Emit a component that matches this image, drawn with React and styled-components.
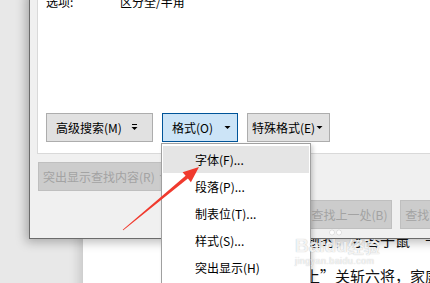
import React from "react"
import styled, { createGlobalStyle } from "styled-components"

const GlobalStyle = createGlobalStyle`
  html, body { margin: 0; padding: 0; background: #e8e8e8; }
  body { font-family: "Noto Sans CJK SC", "Noto Sans", sans-serif; }
`

const Screen = styled.div`
  position: relative;
  width: 430px;
  height: 283px;
  overflow: hidden;
  background: #e8e8e8;
`

// the word document behind the dialog
const DocPage = styled.div`
  position: absolute;
  left: 83px;
  top: 0;
  right: -20px;
  bottom: -20px;
  background: #fff;
  box-shadow: -4px 0 10px rgba(0, 0, 0, 0.14);
  display: flex;
  flex-direction: column;
  gap: 18px;
  padding: 231px 0 0 207px;
  font-family: "Noto Sans CJK SC", sans-serif;
  font-size: 15px;
  line-height: 18px;
  color: #111;
  white-space: nowrap;
`

const Dialog = styled.div`
  position: absolute;
  left: 29px;
  top: -10px;
  width: 470px;
  height: 248px;
  background: #f0f0f0;
  border-left: 1px solid #6b6b6b;
  border-bottom: 1px solid #6b6b6b;
  box-shadow: -3px 3px 10px rgba(0, 0, 0, 0.28);
  display: flex;
  flex-direction: column;
`

const Panel = styled.div`
  box-sizing: border-box;
  height: 164px;
  margin-left: 7px;
  background: #fff;
  border-left: 1px solid #d9d9d9;
  border-bottom: 1px solid #d9d9d9;
  display: flex;
  flex-direction: column;
  justify-content: space-between;
  padding: 4px 0 11px 8px;
`

const OptionRow = styled.div`
  display: flex;
  font-size: 12px;
  line-height: 16px;
  color: #000;
`

const OptionLabel = styled.span`
  width: 74px;
`

const ButtonRow = styled.div`
  display: flex;
  gap: 9px;
`

const Lower = styled.div`
  display: flex;
  flex-direction: column;
  align-items: flex-start;
  padding: 8px 0 0 8px;
`

const FindRow = styled.div`
  display: flex;
  gap: 8px;
  margin-top: 9px;
  padding-left: 269px;
`

const Button = styled.div`
  box-sizing: border-box;
  height: 29px;
  width: ${p => p.$w}px;
  display: flex;
  align-items: center;
  justify-content: ${p => (p.$center ? "center" : "space-between")};
  padding: 0 ${p => p.$pr ?? 0}px 0 ${p => p.$pl ?? 0}px;
  font-size: 12px;
  white-space: nowrap;
  color: ${p => (p.$off ? "#a3a3a3" : "#000")};
  background: ${p => (p.$active ? "#cce4f7" : p.$off ? "#cccccc" : "#e1e1e1")};
  border: 1px solid ${p => (p.$active ? "#005499" : p.$off ? "#bfbfbf" : "#adadad")};
`

const Menu = styled.div`
  position: absolute;
  left: 161px;
  top: 143px;
  width: 150px;
  height: 160px;
  box-sizing: border-box;
  background: #fff;
  border: 1px solid #a0a0a0;
  padding: 2px 1px;
  box-shadow: 2px 2px 4px rgba(0, 0, 0, 0.18);
`

const MenuItem = styled.div`
  height: 27px;
  display: flex;
  align-items: center;
  padding-left: 32px;
  font-size: 12px;
  color: #000;
  background: ${p => (p.$hover ? "#e5e5e5" : "transparent")};
`

const Overlay = styled.svg`
  position: absolute;
  left: 0;
  top: 0;
`

const Watermark = styled.div`
  position: absolute;
  left: 295px;
  top: 229px;
  display: flex;
  flex-direction: column;
  color: rgba(255, 255, 255, 0.85);
  text-shadow: 0 0 1px rgba(0, 0, 0, 0.3);
`

const WmLogo = styled.div`
  display: flex;
  align-items: flex-end;
  font: bold 19px "Liberation Sans", sans-serif;
  line-height: 20px;
`

const Paw = styled.span`
  display: flex;
  flex-direction: column;
  align-items: center;
`

const WmCn = styled.span`
  font: bold 16px "Noto Sans CJK SC", sans-serif;
  line-height: 20px;
`

const WmUrl = styled.div`
  font: 9px "Liberation Sans", sans-serif;
  letter-spacing: 0.4px;
  line-height: 10px;
`

const Caret = ({ color = "#000", bar }) => (
  <svg width="7" height="7" viewBox="0 0 7 7">
    {bar && <rect x="1" y="0" width="5" height="1" fill={color} />}
    <path d={bar ? "M0.5 3 H6.5 L3.5 6 Z" : "M0.5 2 H6.5 L3.5 5 Z"} fill={color} />
  </svg>
)

const menuItems = ["字体(F)...", "段落(P)...", "制表位(T)...", "样式(S)...", "突出显示(H)"]

export default function App() {
  return (
    <Screen>
      <GlobalStyle />
      <DocPage>
        <span>难题的，才答子鼠“千”方百计</span>
        <span>马上”关斩六将，家庭“生活</span>
      </DocPage>

      <Dialog>
        <Panel>
          <OptionRow>
            <OptionLabel>选项:</OptionLabel>
            <span>区分全/半角</span>
          </OptionRow>
          <ButtonRow>
            <Button $w={107} $pl={9} $pr={14}>
              高级搜索(M) <Caret bar />
            </Button>
            <Button $w={76} $pl={9} $pr={6} $active>
              格式(O) <Caret />
            </Button>
            <Button $w={83} $pl={4} $pr={6}>
              特殊格式(E) <Caret />
            </Button>
          </ButtonRow>
        </Panel>
        <Lower>
          <Button $w={135} $pl={4} $pr={6} $off>
            突出显示查找内容(R) <Caret color="#a3a3a3" />
          </Button>
          <FindRow>
            <Button $w={85} $center $off>查找上一处(B)</Button>
            <Button $w={85} $center $off>查找下一处(F)</Button>
          </FindRow>
        </Lower>
      </Dialog>

      <Menu>
        {menuItems.map((t, i) => (
          <MenuItem key={t} $hover={i === 0}>{t}</MenuItem>
        ))}
      </Menu>

      <Overlay width="430" height="283" viewBox="0 0 430 283">
        <polygon
          points="123.3,230.3 187.9,178.6 190.9,182.2 199,167 182.6,172.2 185.6,175.8 122.7,229.7"
          fill="#f03a2e"
        />
      </Overlay>

      <Watermark>
        <WmLogo>
          <span>Bai</span>
          <Paw>
            <svg width="14" height="7" viewBox="0 0 14 7">
              <circle cx="3" cy="3.5" r="2.5" fill="rgba(255,255,255,0.85)" stroke="rgba(0,0,0,0.15)" strokeWidth="0.6" />
              <circle cx="10" cy="3.5" r="2.5" fill="rgba(255,255,255,0.85)" stroke="rgba(0,0,0,0.15)" strokeWidth="0.6" />
            </svg>
            <span>du</span>
          </Paw>
          <WmCn>经验</WmCn>
        </WmLogo>
        <WmUrl>jingyan.baidu.com</WmUrl>
      </Watermark>
    </Screen>
  )
}
